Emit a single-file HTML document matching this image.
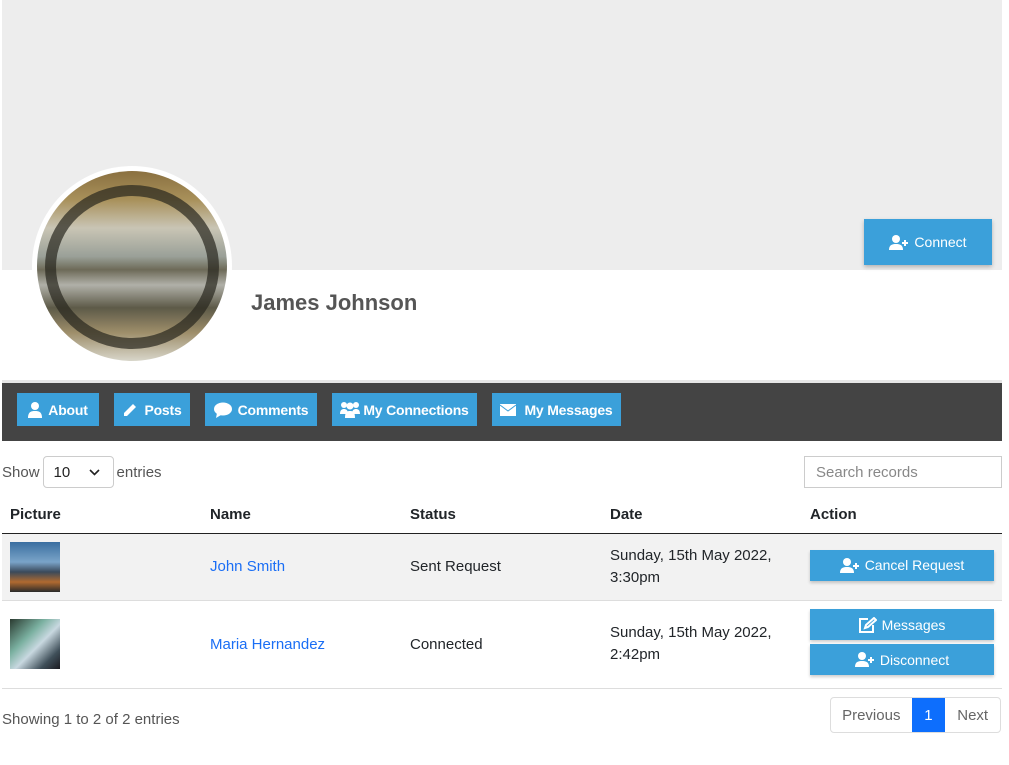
<!DOCTYPE html>
<html><head><style>
*{box-sizing:border-box;margin:0;padding:0}
body{width:1009px;height:765px;background:#fff;font-family:"Liberation Sans",sans-serif;color:#212529;position:relative;overflow:hidden}
.hdr{position:absolute;left:2px;top:0;width:1000px;height:270px;background:#ededed}
.av{position:absolute;left:32px;top:166px;width:200px;height:200px;border-radius:50%;background:#fff;padding:5px}
.av div{width:100%;height:100%;border-radius:50%;overflow:hidden;background:linear-gradient(#8a7040 0%,#a8905a 15%,#c9c5b5 30%,#9aa098 45%,#6d6a58 52%,#b0b0a8 60%,#5d5a48 72%,#9e8e6a 85%,#d8d6ca 100%);position:relative}
.av div:after{content:"";position:absolute;left:8px;top:14px;width:174px;height:164px;border-radius:50%;border:11px solid rgba(40,38,30,.7);box-sizing:border-box}
.conn{position:absolute;left:864px;top:219px;width:128px;height:46px;background:#3ba0da;color:#fff;font-size:14px;display:flex;align-items:center;justify-content:center;gap:5px;box-shadow:0 2px 4px rgba(0,0,0,.25)}
.name{position:absolute;left:251px;top:290px;font-size:22px;font-weight:bold;color:#555}
.sep{position:absolute;left:2px;top:380px;width:1000px;height:3px;background:#e6e6e6}
.nav{position:absolute;left:2px;top:383px;width:1000px;height:58px;background:#444}
.nb{position:absolute;top:10px;height:33px;background:#3ba0da;color:#fff;font-weight:bold;font-size:14px;display:flex;align-items:center;justify-content:center;gap:6px;letter-spacing:-.2px}
.show{position:absolute;left:2px;top:456px;font-size:15px;color:#555;display:flex;align-items:center;gap:3px}
.sel{width:71px;height:32px;border:1px solid #ccc;border-radius:4px;padding-left:10px;display:flex;align-items:center;color:#222;position:relative}
.search{position:absolute;left:804px;top:456px;width:198px;height:32px;border:1px solid #ccc;color:#888;font-size:15px;padding:7px 11px}
table{position:absolute;left:2px;top:497px;width:1000px;border-collapse:collapse;font-size:15px}
th{text-align:left;height:36px;padding-left:8px;border-bottom:1px solid #222;font-weight:bold}
td{padding-left:8px;border-bottom:1px solid #ddd}
a{color:#1a6ef5;text-decoration:none}
.ab{background:#3ba0da;color:#fff;font-size:14px;width:184px;height:31px;display:flex;align-items:center;justify-content:center;gap:5px;box-shadow:0 2px 3px rgba(0,0,0,.2)}
.foot{position:absolute;left:2px;top:711px;font-size:15px;color:#555}
.pg{position:absolute;left:830px;top:697px;width:171px;display:flex;font-size:15px;height:36px;border:1px solid #ddd;border-radius:4px;overflow:hidden}
.pg span{display:flex;align-items:center;justify-content:center;color:#666}
</style></head><body>
<div class="hdr"></div>
<div class="av"><div></div></div>
<div class="conn"><svg width="20" height="15" viewBox="0 0 20 15" fill="#fff"><circle cx="7" cy="4" r="4"/><path d="M0 15c0-5 3-6 7-6s7 1 7 6z"/><path d="M15 5h2v2h2v2h-2v2h-2V9h-2V7h2z"/></svg>Connect</div>
<div class="name">James Johnson</div>
<div class="sep"></div>
<div class="nav">
<div class="nb" style="left:15px;width:82px"><svg width="14" height="16" fill="#fff"><circle cx="7" cy="4" r="4"/><path d="M0 16c0-6 3-7 7-7s7 1 7 7z"/></svg>About</div>
<div class="nb" style="left:112px;width:76px"><svg width="16" height="16" fill="#fff"><path d="M2 11l9-9 3 3-9 9H2z"/></svg>Posts</div>
<div class="nb" style="left:203px;width:112px"><svg width="18" height="16" fill="#fff"><ellipse cx="9" cy="7" rx="9" ry="6.5"/><path d="M3 11l-1 5 5-3z"/></svg>Comments</div>
<div class="nb" style="left:330px;width:145px;gap:3px"><svg width="20" height="17" fill="#fff"><circle cx="4" cy="4" r="3"/><circle cx="16" cy="4" r="3"/><circle cx="10" cy="5" r="3.5"/><path d="M0 13c0-4 2-5 4-5s4 1 4 5zM12 13c0-4 2-5 4-5s4 1 4 5zM5 17c0-6 2-7 5-7s5 1 5 7z"/></svg>My Connections</div>
<div class="nb" style="left:490px;width:129px;gap:8px"><svg width="16" height="12" fill="#fff"><rect width="16" height="12"/><path d="M0 1l8 6 8-6" stroke="#3ba0da" fill="none"/></svg>My Messages</div>
</div>
<div class="show">Show <div class="sel">10<svg style="position:absolute;right:13px;top:12px" width="11" height="7"><path d="M1 1l4.5 4.5L10 1" stroke="#222" stroke-width="1.6" fill="none"/></svg></div> entries</div>
<div class="search">Search records</div>
<table>
<tr><th style="width:200px">Picture</th><th style="width:200px">Name</th><th style="width:200px">Status</th><th style="width:200px">Date</th><th>Action</th></tr>
<tr style="background:#f2f2f2;height:67px"><td><div style="width:50px;height:50px;background:linear-gradient(#3a6ea0,#7aa4c8 40%,#3a4a5a 60%,#b06a30 80%,#2a2a2a)"></div></td><td><a>John Smith</a></td><td>Sent Request</td><td style="line-height:22px">Sunday, 15th May 2022,<br>3:30pm</td><td><div class="ab" style="margin-top:-3px"><svg width="20" height="15" viewBox="0 0 20 15" fill="#fff"><circle cx="7" cy="4" r="4"/><path d="M0 15c0-5 3-6 7-6s7 1 7 6z"/><path d="M15 5h2v2h2v2h-2v2h-2V9h-2V7h2z"/></svg>Cancel Request</div></td></tr>
<tr style="height:88px"><td><div style="width:50px;height:50px;background:linear-gradient(135deg,#2a3a30,#7ab0a0 35%,#c8d8e0 55%,#40505a 80%,#1a1a20)"></div></td><td><a>Maria Hernandez</a></td><td>Connected</td><td style="line-height:22px">Sunday, 15th May 2022,<br>2:42pm</td><td><div class="ab" style="margin-bottom:4px;margin-top:-4px"><svg width="18" height="16" fill="none" stroke="#fff" stroke-width="2"><path d="M9 2H1v13h13V8"/><path d="M6 11l1-3 8-7 2 2-8 7z"/></svg>Messages</div><div class="ab"><svg width="20" height="15" viewBox="0 0 20 15" fill="#fff"><circle cx="7" cy="4" r="4"/><path d="M0 15c0-5 3-6 7-6s7 1 7 6z"/><path d="M15 5h2v2h2v2h-2v2h-2V9h-2V7h2z"/></svg>Disconnect</div></td></tr>
</table>
<div class="foot">Showing 1 to 2 of 2 entries</div>
<div class="pg"><span style="width:81px">Previous</span><span style="width:34px;background:#0d6efd;color:#fff">1</span><span style="width:55px">Next</span></div>
</body></html>
